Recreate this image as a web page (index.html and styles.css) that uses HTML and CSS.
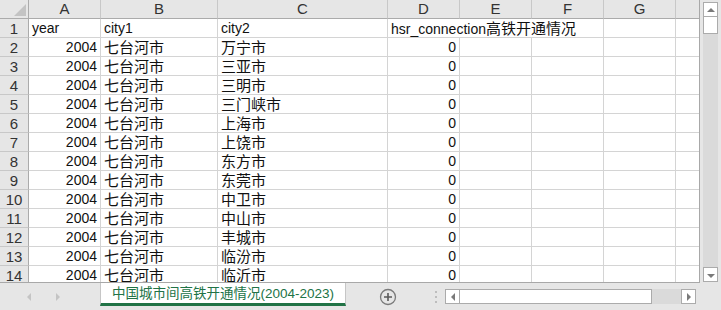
FILE: index.html
```html
<!DOCTYPE html>
<html lang="zh-CN">
<head>
    <meta charset="UTF-8">
    <meta name="viewport" content="width=device-width, initial-scale=1.0">
    <title>中国城市间高铁开通情况</title>
    <link rel="stylesheet" href="styles.css">
</head>
<body>
    <div class="book">
        <div class="main">
            <div class="sheet">
                <div class="grid">
                    <div class="corner"><svg width="28" height="18" viewBox="0 0 28 18"><polygon points="14,16 26,16 26,4" fill="#c3c3c3"/></svg></div>
                    <div class="col">A</div><div class="col">B</div><div class="col">C</div><div class="col">D</div>
                    <div class="col">E</div><div class="col">F</div><div class="col">G</div><div class="col last"></div>

                    <div class="row">1</div>
                    <div class="c">year</div><div class="c">city1</div><div class="c">city2</div>
                    <div class="c wide">hsr_connection<span class="zh">高铁开通情况</span></div>
                    <div class="c"></div><div class="c last"></div>
                </div>
                <div class="grid" id="rows"></div>
            </div>
            <div class="vscroll">
                <div class="sbtn"><svg width="12" height="12" viewBox="0 0 12 12"><polygon points="2,8 10,8 6,4" fill="#7a7a7a"/></svg></div>
                <div class="vthumb"></div>
                <div class="track"></div>
                <div class="sbtn"><svg width="12" height="12" viewBox="0 0 12 12"><polygon points="2,5 10,5 6,9" fill="#7a7a7a"/></svg></div>
            </div>
        </div>
        <div class="tabbar">
            <div class="nav">
                <svg width="8" height="10" viewBox="0 0 8 10"><polygon points="6,1 6,9 2,5" fill="#c4c4c4"/></svg>
                <svg width="8" height="10" viewBox="0 0 8 10"><polygon points="2,1 2,9 6,5" fill="#c4c4c4"/></svg>
            </div>
            <div class="tab">中国城市间高铁开通情况(2004-2023)</div>
            <div class="add">
                <svg width="18" height="18" viewBox="0 0 18 18">
                    <circle cx="9" cy="9" r="7.5" fill="none" stroke="#7a7a7a" stroke-width="1.3"/>
                    <path d="M9 5v8M5 9h8" stroke="#5a5a5a" stroke-width="1.6"/>
                </svg>
            </div>
            <div class="dots"><span></span><span></span><span></span></div>
            <div class="hscroll">
                <div class="sbtn"><svg width="12" height="12" viewBox="0 0 12 12"><polygon points="8,2 8,10 4,6" fill="#7a7a7a"/></svg></div>
                <div class="hthumb"></div>
                <div class="track"></div>
                <div class="sbtn"><svg width="12" height="12" viewBox="0 0 12 12"><polygon points="4,2 4,10 8,6" fill="#7a7a7a"/></svg></div>
            </div>
        </div>
    </div>

    <script>
        // data rows of the sheet (rows 2 to 14)
        var cities = ["万宁市", "三亚市", "三明市", "三门峡市", "上海市", "上饶市", "东方市",
            "东莞市", "中卫市", "中山市", "丰城市", "临汾市", "临沂市"];
        var rows = document.getElementById("rows");
        cities.forEach(function (city, i) {
            var cells = [
                ["row", i + 2],
                ["c n", 2004],
                ["c zh", "七台河市"],
                ["c zh", city],
                ["c n", 0],
                ["c", ""], ["c", ""], ["c", ""], ["c last", ""]
            ];
            cells.forEach(function (cell) {
                var div = document.createElement("div");
                div.className = cell[0];
                div.textContent = cell[1];
                rows.appendChild(div);
            });
        });
    </script>
</body>
</html>
```

FILE: styles.css
```css
body {
    margin: 0;
    background-color: #e6e6e6;
    font-family: "Liberation Sans", "Noto Sans CJK SC", sans-serif;
    overflow: hidden;
}
.book {
    width: 721px;
    height: 310px;
}
.main {
    display: flex;
    height: 283px;
}
.sheet {
    width: 700px;
    height: 283px;
    box-sizing: border-box;
    border-right: 1px solid #a8a8a8;
    border-bottom: 1px solid #a8a8a8;
    overflow: hidden;
    background-color: #fff;
}
.grid {
    display: grid;
    grid-template-columns: 29px 72px 117px 170px 72px 72px 72px 72px 23px;
    grid-auto-rows: 19px;
}
.grid > div {
    box-sizing: border-box;
    border-right: 1px solid #d4d4d4;
    border-bottom: 1px solid #d4d4d4;
    white-space: nowrap;
    overflow: hidden;
}
.grid > .last {
    border-right: none;
}
.corner {
    background-color: #e6e6e6;
    border-bottom-color: #ababab !important;
    border-right-color: #ababab !important;
}
.corner svg {
    display: block;
}
.col {
    background-color: #e6e6e6;
    border-right-color: #c8c8c8 !important;
    border-bottom-color: #ababab !important;
    color: #333;
    font-size: 15px;
    line-height: 18px;
    text-align: center;
}
.row {
    background-color: #e6e6e6;
    border-right-color: #ababab !important;
    border-bottom-color: #c8c8c8 !important;
    color: #333;
    font-size: 15px;
    line-height: 19px;
    text-align: center;
}
.c {
    padding: 0 3px;
    font-size: 14px;
    line-height: 19px;
    color: #111;
}
.c.n {
    text-align: right;
}
.c.zh,
.c .zh {
    font-size: 15px;
}
.c.wide {
    grid-column: span 3;
}
.vscroll {
    display: flex;
    flex-direction: column;
    width: 15px;
    height: 282px;
    margin-left: 3px;
    padding-top: 2px;
    box-sizing: border-box;
}
.sbtn {
    display: flex;
    align-items: center;
    justify-content: center;
    width: 15px;
    height: 15px;
    box-sizing: border-box;
    border: 1px solid #ababab;
    background-color: #fff;
    flex-shrink: 0;
}
.vthumb {
    height: 17px;
    box-sizing: border-box;
    border: 1px solid #ababab;
    border-top: none;
    background-color: #fff;
}
.track {
    flex: 1;
    background-color: #dadada;
}
.tabbar {
    display: flex;
    height: 27px;
}
.nav {
    display: flex;
    align-items: center;
    gap: 21px;
    width: 100px;
    padding-left: 25px;
    box-sizing: border-box;
}
.tab {
    width: 246px;
    height: 23px;
    box-sizing: border-box;
    border-left: 1px solid #c6c6c6;
    border-right: 1px solid #c6c6c6;
    border-bottom: 3px solid #217346;
    background-color: #fff;
    color: #217346;
    font-size: 13.5px;
    line-height: 21px;
    text-align: center;
}
.add {
    display: flex;
    align-items: center;
    justify-content: center;
    width: 50px;
    margin-left: 17px;
}
.add svg {
    display: block;
}
.dots {
    display: flex;
    flex-direction: column;
    justify-content: center;
    gap: 3px;
    width: 16px;
    margin-left: 15px;
    padding-left: 7px;
    box-sizing: border-box;
}
.dots span {
    width: 2px;
    height: 2px;
    background-color: #bdbdbd;
}
.hscroll {
    display: flex;
    width: 251px;
    height: 15px;
    margin-top: 6px;
    margin-left: 1px;
}
.hthumb {
    width: 192px;
    box-sizing: border-box;
    border: 1px solid #ababab;
    border-left: none;
    background-color: #fff;
}
```
